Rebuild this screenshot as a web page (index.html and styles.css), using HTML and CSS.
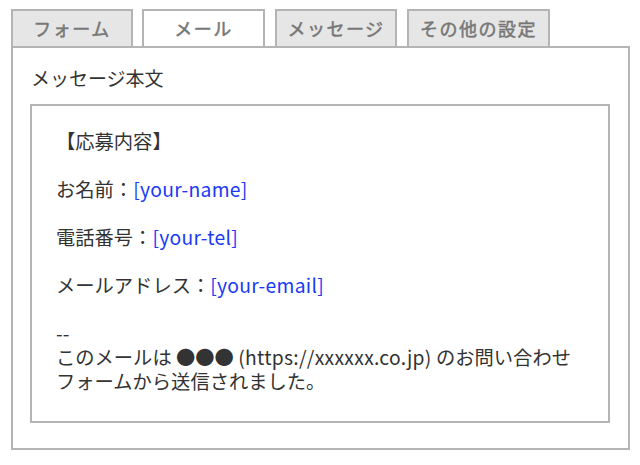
FILE: index.html
```html
<!DOCTYPE html>
<html lang="ja">
<head>
<meta charset="utf-8">
<link rel="stylesheet" href="styles.css">
</head>
<body>
<div class="page">
  <div class="tabs">
    <div class="tab tab-form">フォーム</div>
    <div class="tab tab-mail active">メール</div>
    <div class="tab tab-msg">メッセージ</div>
    <div class="tab tab-other">その他の設定</div>
  </div>
  <div class="panel">
    <div class="heading">メッセージ本文</div>
    <div class="body-box">
      <div class="line">【応募内容】</div>
      <div class="line">&nbsp;</div>
      <div class="line">お名前：<span class="tag latin">[your-name]</span></div>
      <div class="line">&nbsp;</div>
      <div class="line">電話番号：<span class="tag latin">[your-tel]</span></div>
      <div class="line">&nbsp;</div>
      <div class="line">メールアドレス：<span class="tag latin">[your-email]</span></div>
      <div class="line">&nbsp;</div>
      <div class="line">--</div>
      <div class="line">このメールは ●●● <span class="latin">(https://xxxxxx.co.jp)</span> のお問い合わせ</div>
      <div class="line">フォームから送信されました。</div>
    </div>
  </div>
</div>
</body>
</html>
```

FILE: styles.css
```css
html, body {
  margin: 0;
  padding: 0;
  background: #ffffff;
}
body {
  font-family: "Noto Sans CJK JP", "Noto Sans", sans-serif;
  color: #333333;
}
.page {
  padding: 9px 0 0 11px;
}
.tabs {
  display: flex;
  align-items: flex-end;
}
.tab {
  box-sizing: border-box;
  height: 37px;
  border: 2px solid #b4b4b4;
  border-bottom: none;
  background: #e6e6e6;
  color: #777777;
  font-size: 18px;
  font-weight: 400;
  -webkit-text-stroke: 0.5px #777777;
  letter-spacing: 1.5px;
  line-height: 35px;
  text-align: center;
}
.tab.active {
  background: #ffffff;
}
.tab-form { width: 122px; margin-right: 9px; }
.tab-mail { width: 123px; margin-right: 10px; }
.tab-msg { width: 122px; margin-right: 10px; }
.tab-other { width: 143px; }
.panel {
  box-sizing: border-box;
  width: 619px;
  height: 404px;
  border: 2px solid #b4b4b4;
  padding: 18px 17px 25px 17px;
}
.heading {
  font-size: 19px;
  line-height: 24px;
  padding-left: 1px;
  margin-bottom: 14px;
}
.body-box {
  box-sizing: border-box;
  width: 580px;
  height: 319px;
  border: 2px solid #b4b4b4;
  padding: 23px 24px;
}
.line {
  font-size: 19.3px;
  line-height: 24px;
  white-space: nowrap;
}
.latin {
  letter-spacing: 0.3px;
}
.tag {
  color: #1a3af5;
}
```
